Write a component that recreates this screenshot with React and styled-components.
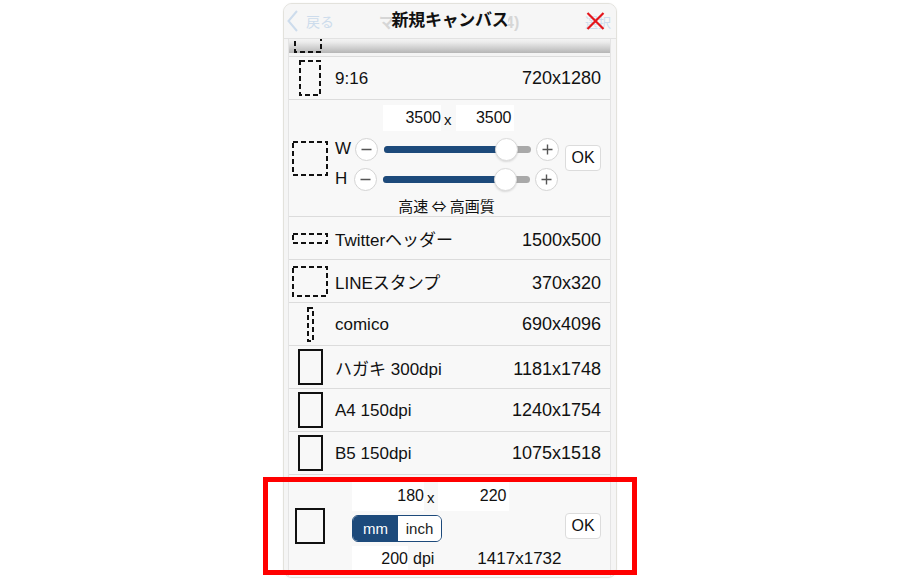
import React from "react";
import styled, { createGlobalStyle } from "styled-components";

const GlobalStyle = createGlobalStyle`
  html, body { margin: 0; padding: 0; background: #ffffff; }
  body {
    font-family: "Liberation Sans", "Noto Sans CJK JP", sans-serif;
    color: #111;
  }
  * { box-sizing: border-box; }
`;

const NAVY = "#1d4a7b";

const Stage = styled.div`
  position: relative;
  width: 900px;
  height: 582px;
  display: flex;
  justify-content: center;
  padding-top: 3px;
`;

const Panel = styled.div`
  width: 334px;
  height: 575px;
  background: #f5f5f5;
  border: 1px solid #e3e2dc;
  border-radius: 9px;
  overflow: hidden;
  display: flex;
  flex-direction: column;
  box-shadow: 0 0 2px rgba(0, 0, 0, 0.05);
`;

/* ---------- header ---------- */

const Header = styled.div`
  position: relative;
  flex: none;
  height: 35px;
  display: grid;
  grid-template-columns: 1fr auto 1fr;
  align-items: center;
  border-bottom: 1px solid #e2e2e2;
  background: #f6f6f6;
`;

/* the page underneath the sheet shows through faintly */
const GhostBar = styled.div`
  position: absolute;
  inset: 0;
  display: grid;
  grid-template-columns: 1fr auto 1fr;
  align-items: center;
  padding: 0 5px 0 3px;
  pointer-events: none;
`;

const GhostBack = styled.div`
  display: flex;
  align-items: center;
  gap: 8px;
  color: #cddcec;
  font-size: 14px;
`;

const GhostTitle = styled.div`
  color: #d6d6d6;
  font-size: 16px;
  font-weight: 700;
`;

const GhostAction = styled.div`
  justify-self: end;
  color: #cddcec;
  font-size: 13px;
`;

const Title = styled.div`
  position: relative;
  grid-column: 2;
  font-size: 17px;
  font-weight: 700;
  color: #111;
  letter-spacing: -0.3px;
  background: #f6f6f6;
  line-height: 22px;
`;

const Close = styled.div`
  position: relative;
  grid-column: 3;
  justify-self: end;
  margin-right: 11px;
  display: flex;
`;

/* ---------- list ---------- */

const Body = styled.div`
  flex: 1;
  padding: 0 5px 0 4px;
  display: flex;
`;

const List = styled.div`
  flex: 1;
  background: #f8f8f8;
  border-left: 1px solid #e4e4e4;
  border-right: 1px solid #e4e4e4;
  display: flex;
  flex-direction: column;
`;

const CutRow = styled.div`
  flex: none;
  height: 18px;
  overflow: hidden;
  display: flex;
  align-items: flex-end;
  padding: 0 0 3px 5px;
  border-bottom: 1px solid #dcdcdc;
  background: linear-gradient(
    to bottom,
    #f3f3f3 0px,
    #ececec 3px,
    #b6b6b6 14px,
    #f4f4f4 14px
  );
`;

const Row = styled.div`
  flex: none;
  height: ${(p) => p.$h || 43}px;
  display: flex;
  align-items: center;
  padding: 0 9px 0 3px;
  border-bottom: ${(p) => (p.$last ? "none" : "1px solid #dcdcdc")};
`;

const IconCell = styled.div`
  flex: none;
  width: ${(p) => p.$w || 36}px;
  display: flex;
  justify-content: center;
  align-items: center;
`;

const TextLine = styled.div`
  flex: 1;
  display: flex;
  align-items: baseline;
  margin-top: 1px;
`;

const Label = styled.div`
  margin-left: 7px;
  font-size: 17px;
  color: #111;
`;

const Value = styled.div`
  margin-left: auto;
  font-size: 18px;
  color: #111;
`;

/* ---------- custom size (slider) ---------- */

const CustomBody = styled.div`
  align-self: flex-start;
  margin-left: 7px;
  width: 223px;
  padding-top: 5px;
  display: flex;
  flex-direction: column;
`;

const InputsLine = styled.div`
  display: flex;
  align-items: center;
  padding-left: ${(p) => p.$indent || 0}px;
  height: ${(p) => p.$h || 26}px;
`;

const NumBox = styled.div`
  width: ${(p) => p.$w}px;
  height: 100%;
  background: #ffffff;
  display: flex;
  align-items: center;
  justify-content: flex-end;
  padding-right: ${(p) => p.$pad || 0}px;
  font-size: 16px;
  color: #111;
`;

const Sep = styled.div`
  font-size: 15px;
  color: #111;
  padding: 0 ${(p) => p.$gap || 4}px 0 3px;
  margin-top: 3px;
`;

const SliderLine = styled.div`
  display: flex;
  align-items: center;
  height: 26px;
  margin-top: ${(p) => p.$mt}px;
`;

const AxisLabel = styled.div`
  width: 15px;
  font-size: 17px;
  color: #111;
`;

const RoundBtn = styled.div`
  flex: none;
  width: 23px;
  height: 23px;
  margin-left: ${(p) => p.$ml || 0}px;
  border-radius: 50%;
  background: #ffffff;
  border: 1px solid #d4d4d4;
  display: flex;
  align-items: center;
  justify-content: center;
`;

const Track = styled.div`
  position: relative;
  flex: none;
  width: 147px;
  height: 7px;
  margin: 0 5px 0 6px;
  border-radius: 4px;
  background: #a9a9a9;
`;

const Fill = styled.div`
  height: 100%;
  border-radius: 4px;
  background: ${NAVY};
`;

const Thumb = styled.div`
  position: absolute;
  top: 50%;
  width: 23px;
  height: 23px;
  margin: -11.5px 0 0 -11.5px;
  border-radius: 50%;
  background: #ffffff;
  border: 1px solid #dadada;
  box-shadow: 0 1px 2px rgba(0, 0, 0, 0.12);
`;

const Caption = styled.div`
  margin-top: 5px;
  text-align: center;
  font-family: "Noto Sans CJK JP", sans-serif;
  font-size: 15px;
  color: #111;
  line-height: 18px;
`;

const OkButton = styled.div`
  flex: none;
  margin-left: auto;
  width: 36px;
  height: 26px;
  border: 1px solid #dcdcdc;
  border-radius: 4px;
  background: #ffffff;
  display: flex;
  align-items: center;
  justify-content: center;
  font-size: 16px;
  color: #111;
`;

/* ---------- custom size (mm / inch) ---------- */

const PrintBody = styled.div`
  margin-left: 24px;
  display: flex;
  flex-direction: column;
  gap: 4px;
`;

const Segmented = styled.div`
  display: flex;
  width: 90px;
  height: 27px;
  border: 1px solid ${NAVY};
  border-radius: 6px;
  overflow: hidden;
`;

const Segment = styled.div`
  flex: ${(p) => (p.$active ? "0 0 45px" : "1")};
  display: flex;
  align-items: center;
  justify-content: center;
  font-size: 15px;
  background: ${(p) => (p.$active ? NAVY : "#ffffff")};
  color: ${(p) => (p.$active ? "#ffffff" : "#222")};
`;

const DpiUnit = styled.div`
  font-size: 16px;
  margin-left: 5px;
  color: #111;
`;

const PixelSize = styled.div`
  margin-left: 43px;
  font-size: 17px;
  color: #111;
`;

const Highlight = styled.div`
  position: absolute;
  left: 263px;
  top: 477px;
  width: 374px;
  height: 98px;
  border: 5px solid #ff0000;
  pointer-events: none;
`;

/* ---------- drawings ---------- */

function Frame({ w, h, dashed }) {
  return (
    <svg width={w} height={h} viewBox={`0 0 ${w} ${h}`}>
      <rect
        x="1"
        y="1"
        width={w - 2}
        height={h - 2}
        fill="none"
        stroke="#111"
        strokeWidth="2"
        strokeDasharray={dashed ? "5 3" : undefined}
      />
    </svg>
  );
}

function Chevron() {
  return (
    <svg width="11" height="22" viewBox="0 0 11 22">
      <path d="M10 1 L1.5 11 L10 21" fill="none" stroke="#cddcec" strokeWidth="2" />
    </svg>
  );
}

function CloseMark() {
  return (
    <svg width="19" height="18" viewBox="0 0 19 18">
      <path d="M1.5 1 L17.5 17 M17.5 1 L1.5 17" stroke="#e5161c" strokeWidth="2.2" />
    </svg>
  );
}

function Minus() {
  return (
    <svg width="11" height="11" viewBox="0 0 11 11">
      <path d="M0.5 5.5 H10.5" stroke="#555" strokeWidth="1.4" />
    </svg>
  );
}

function Plus() {
  return (
    <svg width="11" height="11" viewBox="0 0 11 11">
      <path d="M0.5 5.5 H10.5 M5.5 0.5 V10.5" stroke="#555" strokeWidth="1.4" />
    </svg>
  );
}

function SizeSlider({ axis, ratio, mt }) {
  return (
    <SliderLine $mt={mt}>
      <AxisLabel>{axis}</AxisLabel>
      <RoundBtn $ml={5}>
        <Minus />
      </RoundBtn>
      <Track>
        <Fill style={{ width: `${ratio * 100}%` }} />
        <Thumb style={{ left: `${ratio * 100}%` }} />
      </Track>
      <RoundBtn>
        <Plus />
      </RoundBtn>
    </SliderLine>
  );
}

const presets = [
  { name: "Twitterヘッダー", size: "1500x500", icon: { w: 36, h: 11, dashed: true } },
  { name: "LINEスタンプ", size: "370x320", icon: { w: 36, h: 31, dashed: true } },
  { name: "comico", size: "690x4096", icon: { w: 7, h: 35, dashed: true } },
  { name: "ハガキ 300dpi", size: "1181x1748", icon: { w: 25, h: 36 } },
  { name: "A4 150dpi", size: "1240x1754", icon: { w: 25, h: 36 } },
  { name: "B5 150dpi", size: "1075x1518", icon: { w: 25, h: 36 } },
];

export default function App() {
  return (
    <>
      <GlobalStyle />
      <Stage>
        <Panel>
          <Header>
            <GhostBar>
              <GhostBack>
                <Chevron />
                <span>戻る</span>
              </GhostBack>
              <GhostTitle>マイギャラリー(34)</GhostTitle>
              <GhostAction>選択</GhostAction>
            </GhostBar>
            <Title>新規キャンバス</Title>
            <Close>
              <CloseMark />
            </Close>
          </Header>

          <Body>
            <List>
              <CutRow>
                <IconCell $w={28}>
                  <Frame w={28} h={24} dashed />
                </IconCell>
              </CutRow>

              <Row>
                <IconCell>
                  <Frame w={22} h={36} dashed />
                </IconCell>
                <TextLine>
                  <Label>9:16</Label>
                  <Value>720x1280</Value>
                </TextLine>
              </Row>

              <Row $h={117}>
                <IconCell>
                  <Frame w={36} h={35} dashed />
                </IconCell>
                <CustomBody>
                  <InputsLine $indent={48}>
                    <NumBox $w={58}>3500</NumBox>
                    <Sep>x</Sep>
                    <NumBox $w={58} $pad={2}>3500</NumBox>
                  </InputsLine>
                  <SizeSlider axis="W" ratio={0.83} mt={5} />
                  <SizeSlider axis="H" ratio={0.83} mt={4} />
                  <Caption>高速 ⇔ 高画質</Caption>
                </CustomBody>
                <OkButton>OK</OkButton>
              </Row>

              {presets.map((p) => (
                <Row key={p.name}>
                  <IconCell>
                    <Frame {...p.icon} />
                  </IconCell>
                  <TextLine>
                    <Label>{p.name}</Label>
                    <Value>{p.size}</Value>
                  </TextLine>
                </Row>
              ))}

              <Row $h={102} $last>
                <IconCell>
                  <Frame w={30} h={36} />
                </IconCell>
                <PrintBody>
                  <InputsLine $h={30}>
                    <NumBox $w={72}>180</NumBox>
                    <Sep $gap={3}>x</Sep>
                    <NumBox $w={71} $pad={2}>220</NumBox>
                  </InputsLine>
                  <Segmented>
                    <Segment $active>mm</Segment>
                    <Segment>inch</Segment>
                  </Segmented>
                  <InputsLine>
                    <NumBox $w={56}>200</NumBox>
                    <DpiUnit>dpi</DpiUnit>
                    <PixelSize>1417x1732</PixelSize>
                  </InputsLine>
                </PrintBody>
                <OkButton>OK</OkButton>
              </Row>
            </List>
          </Body>
        </Panel>
        <Highlight />
      </Stage>
    </>
  );
}
